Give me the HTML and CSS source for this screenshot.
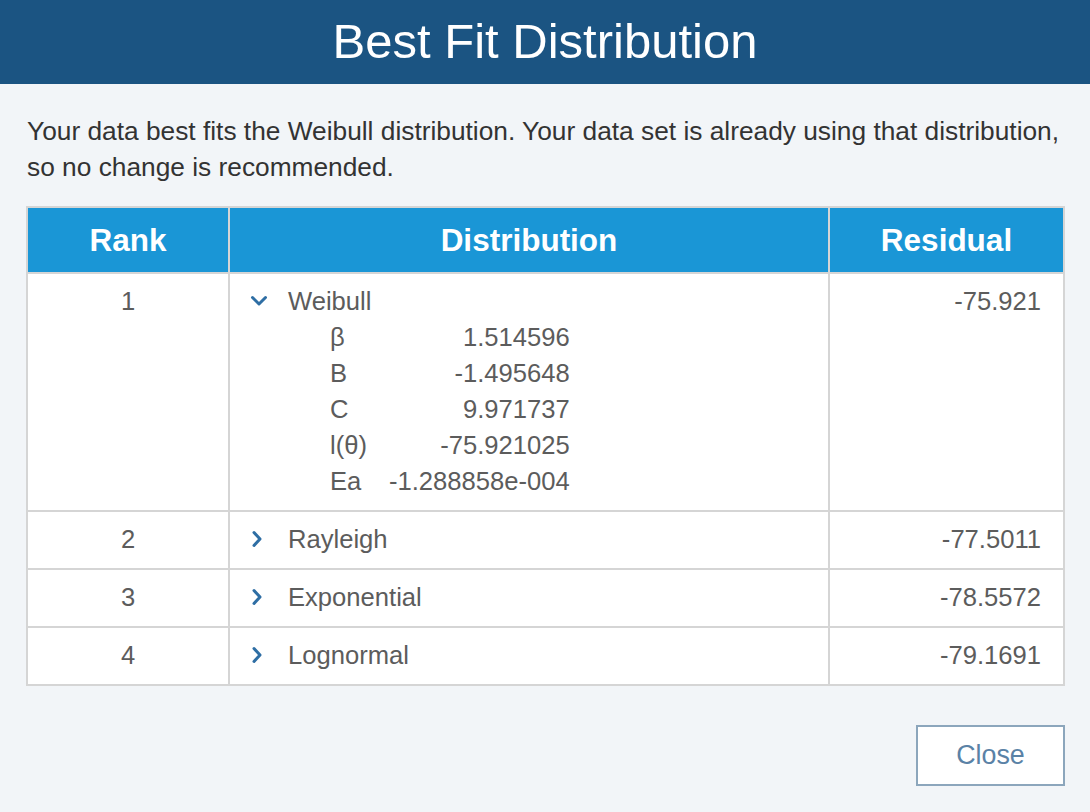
FILE: index.html
```html
<!DOCTYPE html>
<html>
<head>
<meta charset="utf-8">
<link rel="stylesheet" href="styles.css">
</head>
<body>
<div class="dialog">
  <header class="titlebar">Best Fit Distribution</header>
  <main class="content">
    <p class="message">Your data best fits the Weibull distribution. Your data set is already using that distribution, so no change is recommended.</p>
    <table class="results">
      <thead>
        <tr>
          <th class="c-rank">Rank</th>
          <th class="c-dist">Distribution</th>
          <th class="c-res">Residual</th>
        </tr>
      </thead>
      <tbody>
        <tr>
          <td class="c-rank">1</td>
          <td class="c-dist">
            <div class="dist-name">
              <span class="chev"><svg width="18" height="12" viewBox="0 0 18 12"><path d="M2.5 2.5 L9 9 L15.5 2.5" fill="none" stroke="#2e6ea4" stroke-width="3" stroke-linecap="round" stroke-linejoin="round"/></svg></span>
              <span>Weibull</span>
            </div>
            <div class="params">
              <span>β</span><span class="val">1.514596</span>
              <span>B</span><span class="val">-1.495648</span>
              <span>C</span><span class="val">9.971737</span>
              <span>l(θ)</span><span class="val">-75.921025</span>
              <span>Ea</span><span class="val">-1.288858e-004</span>
            </div>
          </td>
          <td class="c-res">-75.921</td>
        </tr>
        <tr>
          <td class="c-rank">2</td>
          <td class="c-dist"><div class="dist-name"><span class="chev"><svg width="18" height="18" viewBox="0 0 18 18"><path d="M4 2.5 L10 9 L4 15.5" fill="none" stroke="#2e6ea4" stroke-width="3" stroke-linecap="round" stroke-linejoin="round"/></svg></span><span>Rayleigh</span></div></td>
          <td class="c-res">-77.5011</td>
        </tr>
        <tr>
          <td class="c-rank">3</td>
          <td class="c-dist"><div class="dist-name"><span class="chev"><svg width="18" height="18" viewBox="0 0 18 18"><path d="M4 2.5 L10 9 L4 15.5" fill="none" stroke="#2e6ea4" stroke-width="3" stroke-linecap="round" stroke-linejoin="round"/></svg></span><span>Exponential</span></div></td>
          <td class="c-res">-78.5572</td>
        </tr>
        <tr>
          <td class="c-rank">4</td>
          <td class="c-dist"><div class="dist-name"><span class="chev"><svg width="18" height="18" viewBox="0 0 18 18"><path d="M4 2.5 L10 9 L4 15.5" fill="none" stroke="#2e6ea4" stroke-width="3" stroke-linecap="round" stroke-linejoin="round"/></svg></span><span>Lognormal</span></div></td>
          <td class="c-res">-79.1691</td>
        </tr>
      </tbody>
    </table>
    <div class="actions">
      <button class="close-btn">Close</button>
    </div>
  </main>
</div>
</body>
</html>
```

FILE: styles.css
```css
html, body {
  margin: 0;
  padding: 0;
}
body {
  width: 1090px;
  height: 812px;
  background: #f2f5f8;
  font-family: "Liberation Sans", Arial, sans-serif;
  overflow: hidden;
}
.dialog {
  display: flex;
  flex-direction: column;
}
.titlebar {
  height: 84px;
  background: #1b5482;
  color: #ffffff;
  font-size: 49px;
  display: flex;
  align-items: center;
  justify-content: center;
  padding-bottom: 2px;
  box-sizing: border-box;
}
.content {
  padding: 29px 25px 0 26px;
  display: flex;
  flex-direction: column;
}
.message {
  margin: 0 0 21px 1px;
  font-size: 26.3px;
  line-height: 36px;
  color: #333333;
}
.results {
  border-collapse: collapse;
  width: 1039px;
  border: 2px solid #d5d5d5;
  background: #ffffff;
  table-layout: fixed;
}
.results th {
  background: #1a96d6;
  color: #ffffff;
  font-weight: bold;
  font-size: 31.5px;
  height: 64px;
  padding: 0;
  border-left: 2px solid #d5d5d5;
  border-right: 2px solid #d5d5d5;
  text-align: center;
}
.results th.c-rank { width: 200px; }
.results th.c-dist { width: 598px; }
.results td {
  border: 2px solid #d5d5d5;
  vertical-align: top;
  padding: 9px 0 11px 0;
  font-size: 25.6px;
  line-height: 36px;
  color: #5c5c5c;
}
.results td.c-rank { text-align: center; }
.results td.c-dist { padding-left: 20px; }
.results td.c-res { text-align: right; padding-right: 22px; }
.dist-name {
  display: flex;
  align-items: center;
}
.chev {
  width: 18px;
  margin-right: 20px;
  display: flex;
  align-items: center;
  justify-content: center;
}
.params {
  display: grid;
  grid-template-columns: auto auto;
  column-gap: 22px;
  justify-content: start;
  margin-left: 80px;
}
.params .val { text-align: right; }
.actions {
  display: flex;
  justify-content: flex-end;
  margin-top: 39px;
}
.close-btn {
  width: 149px;
  height: 61px;
  border: 2px solid #8ca6bc;
  background: #ffffff;
  color: #5a82a6;
  font-family: "Liberation Sans", Arial, sans-serif;
  font-size: 26.8px;
  padding: 0;
}
```
